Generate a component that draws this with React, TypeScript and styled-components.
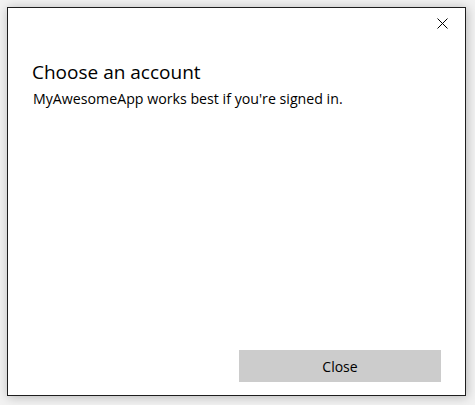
import styled, { createGlobalStyle } from "styled-components";

const GlobalStyle = createGlobalStyle`
  html, body {
    margin: 0;
    padding: 0;
    background: #f0f0f0;
  }
  body {
    font-family: "Open Sans", "Noto Sans", sans-serif;
  }
`;

const Backdrop = styled.div`
  width: 475px;
  height: 405px;
  padding: 7px 9px 9px 7px;
  box-sizing: border-box;
  background: #f2f2f2;
`;

const Dialog = styled.div`
  height: 100%;
  box-sizing: border-box;
  background: #fff;
  border: 1px solid #1e1e1e;
  box-shadow: 1px 1px 10px rgba(0, 0, 0, 0.25);
  display: flex;
  flex-direction: column;
`;

const TitleBar = styled.div`
  display: flex;
  justify-content: flex-end;
  height: 30px;
`;

const CloseIcon = styled.button`
  width: 46px;
  height: 30px;
  border: none;
  background: transparent;
  display: flex;
  align-items: center;
  justify-content: center;
  padding: 0;
`;

const Content = styled.div`
  flex: 1;
  display: flex;
  flex-direction: column;
  padding: 21px 24px 13px 24px;
`;

const Heading = styled.h1`
  margin: 0;
  font-size: 19px;
  font-weight: 400;
  color: #000;
  line-height: 26px;
`;

const Message = styled.p`
  margin: 4px 0 0 1px;
  font-size: 14.2px;
  color: #000;
  line-height: 20px;
`;

const Footer = styled.div`
  margin-top: auto;
  display: flex;
  justify-content: flex-end;
`;

const Button = styled.button`
  width: 202px;
  height: 32px;
  border: none;
  background: #cccccc;
  color: #000;
  font-family: inherit;
  font-size: 14px;
  padding: 0;
`;

export default function App() {
  return (
    <>
      <GlobalStyle />
      <Backdrop>
        <Dialog>
          <TitleBar>
            <CloseIcon aria-label="Close">
              <svg width="11" height="11" viewBox="0 0 11 11">
                <path d="M0.5 0.5L10.5 10.5M10.5 0.5L0.5 10.5" stroke="#000" strokeWidth="1" />
              </svg>
            </CloseIcon>
          </TitleBar>
          <Content>
            <Heading>Choose an account</Heading>
            <Message>MyAwesomeApp works best if you're signed in.</Message>
            <Footer>
              <Button>Close</Button>
            </Footer>
          </Content>
        </Dialog>
      </Backdrop>
    </>
  );
}
